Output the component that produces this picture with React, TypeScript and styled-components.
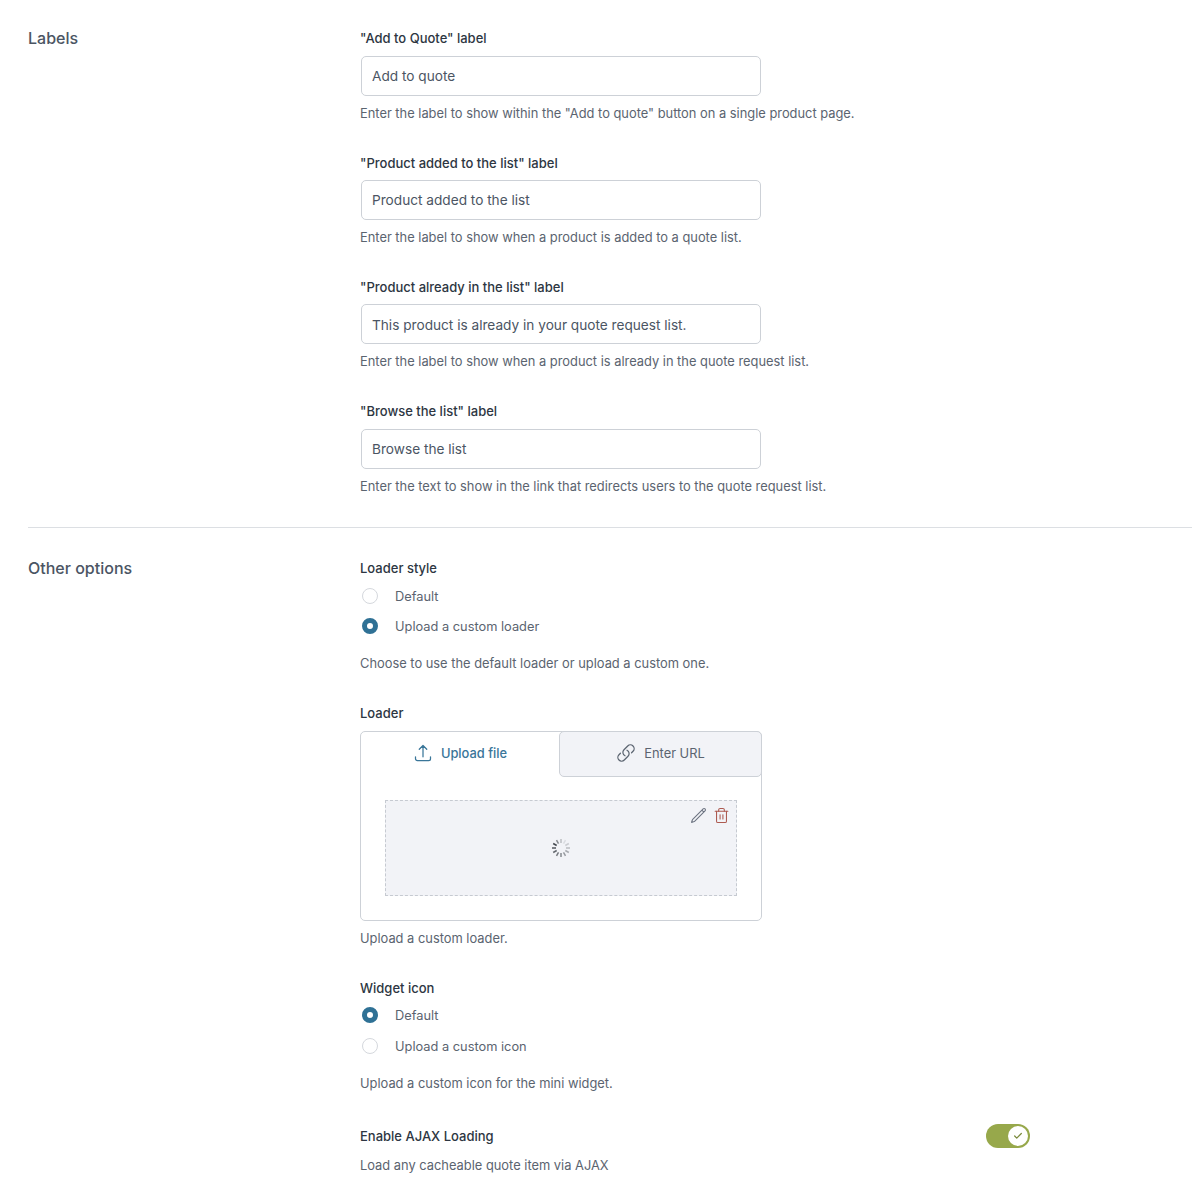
import styled, { createGlobalStyle } from "styled-components";
import { HiOutlineArrowUpTray, HiOutlineLink, HiOutlinePencil } from "react-icons/hi2";
import { Check, Trash2 } from "lucide-react";

const GlobalStyle = createGlobalStyle`
  html, body {
    margin: 0;
    padding: 0;
    background: #fff;
    font-family: Inter, "Liberation Sans", sans-serif;
    -webkit-font-smoothing: antialiased;
  }
  * {
    box-sizing: border-box;
  }
`;

const Page = styled.div`
  padding-left: 28px;
  width: 1192px;
  height: 1198px;
  overflow: hidden;
`;

const Section = styled.section<{ $top: number; $bottom: number; $divider?: boolean }>`
  display: grid;
  grid-template-columns: 332px 670px;
  padding-top: ${(p) => p.$top}px;
  padding-bottom: ${(p) => p.$bottom}px;
  border-bottom: ${(p) => (p.$divider ? "1px solid #dcdfe3" : "none")};
`;

const SectionTitle = styled.h2`
  margin: 0;
  font-size: 16px;
  line-height: 20px;
  font-weight: 500;
  color: #4b5563;
`;

const Fields = styled.div`
  display: flex;
  flex-direction: column;
`;

const Field = styled.div<{ $gap?: number }>`
  display: flex;
  flex-direction: column;
  margin-bottom: ${(p) => p.$gap ?? 0}px;
`;

const Label = styled.div`
  font-size: 13px;
  line-height: 20px;
  font-weight: 500;
  color: #2d3642;
`;

const Input = styled.input`
  display: block;
  width: 400px;
  height: 40px;
  margin: 7.5px 0 0 1px;
  padding: 0.6px 10px 0;
  border: 1px solid #cdd1d7;
  border-radius: 5px;
  background: #fff;
  font: 400 13.65px Inter, "Liberation Sans", sans-serif;
  color: #4b5563;
  outline: none;
`;

const Help = styled.div<{ $top: number }>`
  margin-top: ${(p) => p.$top}px;
  font-size: 12.87px;
  line-height: 20px;
  color: #5b6470;
`;

const RadioList = styled.div<{ $top: number; $gap: number }>`
  display: flex;
  flex-direction: column;
  gap: ${(p) => p.$gap}px;
  margin-top: ${(p) => p.$top}px;
`;

const RadioRow = styled.div`
  display: flex;
  align-items: center;
  height: 20px;
`;

const RadioText = styled.span`
  padding-top: 2px;
  font-size: 12.82px;
  color: #5b6470;
`;

const RadioDot = styled.span<{ $on?: boolean }>`
  width: 16px;
  height: 16px;
  margin: 0 17px 0 2px;
  border-radius: 50%;
  background: #fff;
  border: ${(p) => (p.$on ? "5px solid #2f7195" : "1px solid #d5d8dd")};
`;

const UploadBox = styled.div`
  width: 402px;
  height: 190px;
  margin-top: 8px;
  border: 1px solid #cdd1d7;
  border-radius: 5px;
  background: #fff;
`;

const Tabs = styled.div`
  display: grid;
  grid-template-columns: 198px 203px;
  height: 45px;
  margin: -1px -1px 0 0;
`;

const Tab = styled.div<{ $active?: boolean }>`
  display: flex;
  align-items: center;
  justify-content: center;
  gap: 8px;
  height: 46px;
  padding-bottom: 2px;
  font-size: 12.87px;
  font-weight: ${(p) => (p.$active ? 500 : 400)};
  color: ${(p) => (p.$active ? "#3a7699" : "#5b6470")};
  background: ${(p) => (p.$active ? "transparent" : "#f2f3f7")};
  border: ${(p) => (p.$active ? "none" : "1px solid #cdd1d7")};
  border-radius: ${(p) => (p.$active ? "0" : "5px")};

  svg {
    width: 20px;
    height: 20px;
    flex: none;
  }
`;

const DropZone = styled.div`
  position: relative;
  display: flex;
  align-items: center;
  justify-content: center;
  width: 352px;
  height: 96px;
  margin: 24px 0 0 24px;
  background: #f2f3f7;
  border: 1px dashed #c6cad1;
`;

const ZoneActions = styled.div`
  position: absolute;
  top: 6px;
  right: 6px;
  display: flex;
  align-items: center;
  gap: 6px;
`;

const EditIcon = styled(HiOutlinePencil)`
  width: 17px;
  height: 17px;
  color: #6b7280;
`;

const DeleteIcon = styled(Trash2)`
  width: 17px;
  height: 17px;
  color: #ad5a50;
`;

const ToggleRow = styled.div`
  display: flex;
  align-items: center;
  justify-content: space-between;
  height: 24px;
`;

const Toggle = styled.div`
  display: flex;
  align-items: center;
  justify-content: flex-end;
  width: 44px;
  height: 24px;
  padding-right: 2px;
  border-radius: 12px;
  background: #97a84b;
`;

const ToggleKnob = styled.span`
  display: flex;
  align-items: center;
  justify-content: center;
  width: 20px;
  height: 20px;
  border-radius: 50%;
  background: #fff;
  color: #7b8a3c;
`;

function Spinner() {
  const ticks = Array.from({ length: 12 }, (_, i) => i);
  return (
    <svg width="20" height="20" viewBox="0 0 20 20">
      {ticks.map((i) => (
        <line
          key={i}
          x1="10"
          y1="1"
          x2="10"
          y2="5"
          stroke="#3f444b"
          strokeWidth="1.5"
          opacity={i <= 9 ? 0.12 + i * 0.095 : 0.6 - (i - 10) * 0.3}
          transform={`rotate(${i * 30 + 30} 10 10)`}
        />
      ))}
    </svg>
  );
}

const labelFields = [
  {
    label: '"Add to Quote" label',
    value: "Add to quote",
    help: 'Enter the label to show within the "Add to quote" button on a single product page.',
  },
  {
    label: '"Product added to the list" label',
    value: "Product added to the list",
    help: "Enter the label to show when a product is added to a quote list.",
  },
  {
    label: '"Product already in the list" label',
    value: "This product is already in your quote request list.",
    help: "Enter the label to show when a product is already in the quote request list.",
  },
  {
    label: '"Browse the list" label',
    value: "Browse the list",
    help: "Enter the text to show in the link that redirects users to the quote request list.",
  },
];

export default function App() {
  return (
    <>
      <GlobalStyle />
      <Page>
        <Section $top={28.45} $bottom={30.45} $divider>
          <SectionTitle>Labels</SectionTitle>
          <Fields>
            {labelFields.map((f, i) => (
              <Field key={f.label} $gap={i < labelFields.length - 1 ? 28.7 : 0}>
                <Label>{f.label}</Label>
                <Input defaultValue={f.value} />
                <Help $top={8}>{f.help}</Help>
              </Field>
            ))}
          </Fields>
        </Section>
        <Section $top={30} $bottom={0}>
          <SectionTitle>Other options</SectionTitle>
          <Fields>
            <Field $gap={29.5}>
              <Label>Loader style</Label>
              <RadioList $top={8} $gap={10}>
                <RadioRow>
                  <RadioDot />
                  <RadioText>Default</RadioText>
                </RadioRow>
                <RadioRow>
                  <RadioDot $on />
                  <RadioText>Upload a custom loader</RadioText>
                </RadioRow>
              </RadioList>
              <Help $top={18}>Choose to use the default loader or upload a custom one.</Help>
            </Field>
            <Field $gap={29}>
              <Label>Loader</Label>
              <UploadBox>
                <Tabs>
                  <Tab $active>
                    <HiOutlineArrowUpTray />
                    Upload file
                  </Tab>
                  <Tab>
                    <HiOutlineLink />
                    Enter URL
                  </Tab>
                </Tabs>
                <DropZone>
                  <ZoneActions>
                    <EditIcon />
                    <DeleteIcon strokeWidth={1.5} />
                  </ZoneActions>
                  <Spinner />
                </DropZone>
              </UploadBox>
              <Help $top={8}>Upload a custom loader.</Help>
            </Field>
            <Field $gap={30}>
              <Label>Widget icon</Label>
              <RadioList $top={6.5} $gap={11}>
                <RadioRow>
                  <RadioDot $on />
                  <RadioText>Default</RadioText>
                </RadioRow>
                <RadioRow>
                  <RadioDot />
                  <RadioText>Upload a custom icon</RadioText>
                </RadioRow>
              </RadioList>
              <Help $top={18}>Upload a custom icon for the mini widget.</Help>
            </Field>
            <Field>
              <ToggleRow>
                <Label>Enable AJAX Loading</Label>
                <Toggle>
                  <ToggleKnob>
                    <Check size={10} strokeWidth={3} />
                  </ToggleKnob>
                </Toggle>
              </ToggleRow>
              <Help $top={8}>Load any cacheable quote item via AJAX</Help>
            </Field>
          </Fields>
        </Section>
      </Page>
    </>
  );
}
